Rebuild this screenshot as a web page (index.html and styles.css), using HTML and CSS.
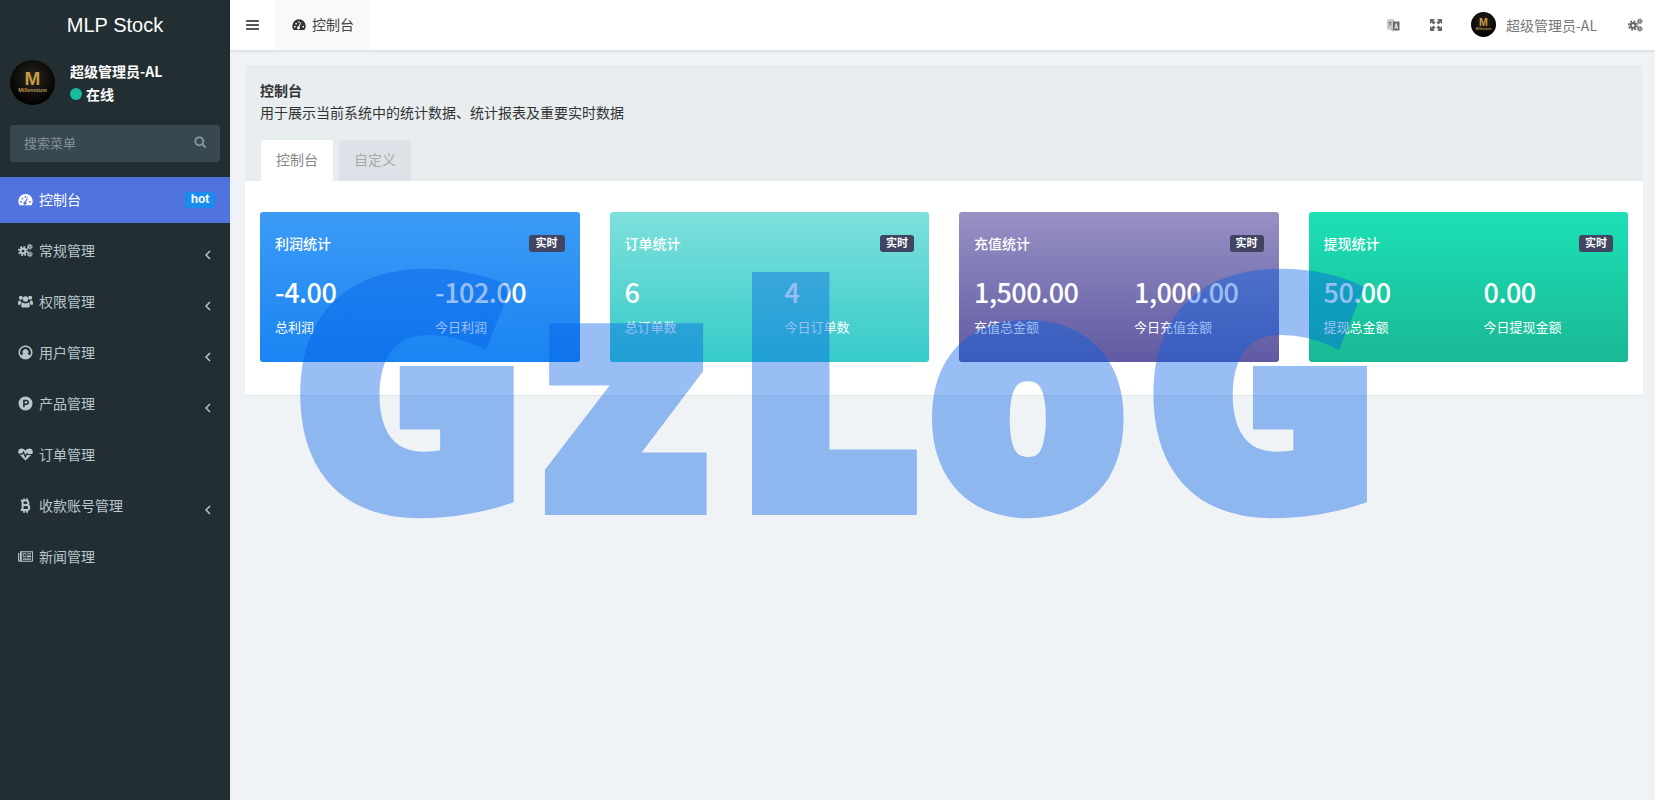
FILE: index.html
```html
<!DOCTYPE html>
<html lang="zh">
<head>
<meta charset="utf-8">
<title>MLP Stock</title>
<link rel="stylesheet" href="styles.css">
</head>
<body>
<svg class="sprite" xmlns="http://www.w3.org/2000/svg">
  <symbol id="i-gauge" viewBox="0 0 16 14"><path fill-rule="evenodd" fill="currentColor" d="M8 1A7.7 7.7 0 0 0 .3 8.7c0 1.5.4 2.9 1.2 4.1.2.3.5.4.8.4h11.4c.3 0 .6-.1.8-.4.8-1.2 1.2-2.6 1.2-4.1A7.7 7.7 0 0 0 8 1zM3.6 2.9zM2.2 9.5a1 1 0 1 0 2 0 1 1 0 1 0-2 0zM3.7 6a1 1 0 1 0 2 0 1 1 0 1 0-2 0zM7 4.2a1 1 0 1 0 2 0 1 1 0 1 0-2 0zM11.8 9.5a1 1 0 1 0 2 0 1 1 0 1 0-2 0zM9.9 4.6L7.4 9.1a1.7 1.7 0 1 0 1.2.5l2.1-4.7z"/></symbol>
  <symbol id="i-cogs" viewBox="0 0 16 14"><g fill="none" stroke="currentColor"><circle cx="5.4" cy="7.6" r="2.6" stroke-width="2.2"/><circle cx="5.4" cy="7.6" r="4.6" stroke-width="1.7" stroke-dasharray="2 1.6"/><circle cx="12.6" cy="3" r="1.5" stroke-width="1.3"/><circle cx="12.6" cy="3" r="2.6" stroke-width="1" stroke-dasharray="1.2 .85"/><circle cx="12.6" cy="11" r="1.5" stroke-width="1.3"/><circle cx="12.6" cy="11" r="2.6" stroke-width="1" stroke-dasharray="1.2 .85"/></g></symbol>
  <symbol id="i-users" viewBox="0 0 16 14"><g fill="currentColor"><circle cx="3" cy="3" r="2.1"/><circle cx="13" cy="3" r="2.1"/><circle cx="8" cy="4.4" r="2.9"/><path d="M0 9.2C0 7 .7 5.8 1.8 5.8c.5 0 1 .3 1.3.4-.2 1 .2 1.7.9 2.4-1 .5-1.6 1.2-1.9 2.1H1c-.6 0-1-.5-1-1.5zM16 9.2c0-2.2-.7-3.4-1.8-3.4-.5 0-1 .3-1.3.4.2 1-.2 1.7-.9 2.4 1 .5 1.6 1.2 1.9 2.1H15c.6 0 1-.5 1-1.5zM3.4 11.4c0-2 .8-3.3 1.8-3.3.8.6 1.7 1 2.8 1s2-.4 2.8-1c1 0 1.8 1.3 1.8 3.3 0 1.2-.7 2.1-1.8 2.1H5.2c-1.100 0-1.800-.9-1.800-2.100z"/></g></symbol>
  <symbol id="i-user" viewBox="0 0 16 16"><path fill-rule="evenodd" fill="currentColor" d="M8 .5a7.500 7.500 0 1 0 0 15 7.500 7.500 0 0 0 0-15zM8 2.100a5.900 5.900 0 0 1 4.700 9.400C12 10.300 11.100 9.900 10.300 9.700a3.100 3.100 0 1 0-4.600 0c-.8.2-1.700.6-2.400 1.800A5.900 5.900 0 0 1 8 2.100z"/></symbol>
  <symbol id="i-p" viewBox="0 0 16 16"><path fill-rule="evenodd" fill="currentColor" d="M8 .5a7.500 7.500 0 1 0 0 15 7.500 7.500 0 0 0 0-15zM5.500 3.900h3.400a2.800 2.800 0 0 1 0 5.600H7.200v2.600H5.500zM7.200 5.500v2.400h1.700a1.200 1.200 0 0 0 0-2.400z"/></symbol>
  <symbol id="i-heart" viewBox="0 0 16 14"><path fill="currentColor" d="M8 13.500L1.700 7.300C.6 6.200.2 5.200.2 4.200.2 2 1.800.7 3.900.7 5.500.7 7 1.700 8 3c1-1.300 2.500-2.300 4.100-2.300 2.100 0 3.700 1.300 3.700 3.500 0 1-.4 2-1.500 3.100z"/><path class="pulse" fill="none" stroke-width="1.300" d="M0 6.500h4.600l1.300-2 2 5 1.800-3.400.7.9h6"/></symbol>
  <symbol id="i-btc" viewBox="0 0 12 16"><path fill="none" stroke="currentColor" stroke-width="2.100" d="M1 2.800h5.700c3.100 0 3.100 4.700 0 4.700H2.900M2.900 7.500h4.300c3.700 0 3.700 5.300 0 5.300H1M2.900 2.800v10M4.500 .4v2.400M7.700 .4v2.400M4.500 12.800v2.800M7.700 12.800v2.800"/></symbol>
  <symbol id="i-news" viewBox="0 0 16 12"><path fill-rule="evenodd" fill="currentColor" d="M3 .5h13v10.200c0 .5-.4.8-.8.8H1.100c-.6 0-1-.4-1-1V2.300h1.200v8c0 .2.200.3.400.3s.4-.1.400-.3V.5zM4 1.500v9h11v-9zM5 2.500h3.800v3.800H5zM5.900 3.300v2.200h2.100V3.300zM9.700 2.500H14v.9H9.700zM9.700 4H14v.9H9.700zM9.700 5.500H14v.9H9.700zM5 7.200h9v.9H5zM5 8.800h9v.9H5z"/></symbol>
  <symbol id="i-bars" viewBox="0 0 14 12"><g fill="currentColor"><rect y="1" width="13" height="2" rx=".4"/><rect y="5" width="13" height="2" rx=".4"/><rect y="9" width="13" height="2" rx=".4"/></g></symbol>
  <symbol id="i-expand" viewBox="0 0 14 14"><path fill="currentColor" d="M1 1h5L4.500 2.500l2 2-2 2-2-2L1 6zM13 1v5l-1.500-1.500-2 2-2-2 2-2L8 1zM1 13V8l1.500 1.500 2-2 2 2-2 2L6 13zM13 13H8l1.500-1.500-2-2 2-2 2 2L13 8z"/></symbol>
  <symbol id="i-lang" viewBox="0 0 14 14"><path fill="#c9c9c9" d="M1 1.500l6-.8 1 1.300v10.500L1 11.200z"/><path fill="#666" d="M7 3.500h6.500v9H7z"/><path fill="none" stroke="#fff" stroke-width=".9" d="M8.700 11l1.500-5.500 1.500 5.500M9.300 9.300h1.900"/><path fill="none" stroke="#777" stroke-width=".8" d="M2.500 4.500h3M4 3.500v1M3 7.500l2-3M3.500 5.500l2 2"/><path fill="#bbb" d="M4 11.500l3 2.200v-2z"/></symbol>
  <symbol id="i-search" viewBox="0 0 14 14"><path fill="none" stroke="currentColor" stroke-width="1.900" d="M9.100 9.100l3.400 3.400M10 5.700a4.300 4.300 0 1 1-8.600 0 4.300 4.300 0 0 1 8.600 0z"/></symbol>
  <symbol id="i-logo" viewBox="0 0 45 45"><defs><radialGradient id="logo-bg" cx=".5" cy=".4" r=".6"><stop offset="0" stop-color="#2b2620"/><stop offset="1" stop-color="#000"/></radialGradient></defs><circle cx="22.500" cy="22.500" r="22.500" fill="url(#logo-bg)"/><text x="22.500" y="25" text-anchor="middle" class="logo-m">M</text><text x="22.500" y="31.500" text-anchor="middle" class="logo-s">Millennium</text></symbol>
</svg>

<aside class="sidebar">
  <div class="brand">MLP Stock</div>
  <div class="user-panel">
    <svg class="avatar"><use href="#i-logo"/></svg>
    <div class="user-info">
      <div class="user-name">超级管理员-AL</div>
      <div class="user-status"><span class="dot"></span>在线</div>
    </div>
  </div>
  <div class="search">
    <span>搜索菜单</span>
    <svg class="search-icon"><use href="#i-search"/></svg>
  </div>
  <nav class="menu">
    <a class="item active"><svg class="ic"><use href="#i-gauge"/></svg><span class="lbl">控制台</span><span class="hot">hot</span></a>
    <a class="item"><svg class="ic"><use href="#i-cogs"/></svg><span class="lbl">常规管理</span><svg class="chev" viewBox="0 0 6 10"><path d="M5 1L1 5l4 4"/></svg></a>
    <a class="item"><svg class="ic"><use href="#i-users"/></svg><span class="lbl">权限管理</span><svg class="chev" viewBox="0 0 6 10"><path d="M5 1L1 5l4 4"/></svg></a>
    <a class="item"><svg class="ic"><use href="#i-user"/></svg><span class="lbl">用户管理</span><svg class="chev" viewBox="0 0 6 10"><path d="M5 1L1 5l4 4"/></svg></a>
    <a class="item"><svg class="ic"><use href="#i-p"/></svg><span class="lbl">产品管理</span><svg class="chev" viewBox="0 0 6 10"><path d="M5 1L1 5l4 4"/></svg></a>
    <a class="item"><svg class="ic"><use href="#i-heart"/></svg><span class="lbl">订单管理</span></a>
    <a class="item"><svg class="ic"><use href="#i-btc"/></svg><span class="lbl">收款账号管理</span><svg class="chev" viewBox="0 0 6 10"><path d="M5 1L1 5l4 4"/></svg></a>
    <a class="item"><svg class="ic"><use href="#i-news"/></svg><span class="lbl">新闻管理</span></a>
  </nav>
</aside>

<div class="main">
  <header class="topbar">
    <svg class="bars"><use href="#i-bars"/></svg>
    <div class="top-tab"><svg class="top-tab-ic"><use href="#i-gauge"/></svg>控制台</div>
    <div class="top-right">
      <svg class="tool t-lang"><use href="#i-lang"/></svg>
      <svg class="tool t-expand"><use href="#i-expand"/></svg>
      <svg class="top-avatar"><use href="#i-logo"/></svg>
      <span class="top-name">超级管理员-AL</span>
      <svg class="tool t-cogs"><use href="#i-cogs"/></svg>
    </div>
  </header>

  <section class="panel">
    <div class="panel-head">
      <div class="ph-title">控制台</div>
      <div class="ph-desc">用于展示当前系统中的统计数据、统计报表及重要实时数据</div>
      <div class="tabs">
        <div class="tab current">控制台</div>
        <div class="tab">自定义</div>
      </div>
    </div>
    <div class="panel-body">
      <div class="card c-blue">
        <div class="card-head"><span>利润统计</span><span class="badge">实时</span></div>
        <div class="stats">
          <div><div class="num">-4.00</div><div class="cap">总利润</div></div>
          <div><div class="num">-102.00</div><div class="cap">今日利润</div></div>
        </div>
      </div>
      <div class="card c-teal">
        <div class="card-head"><span>订单统计</span><span class="badge">实时</span></div>
        <div class="stats">
          <div><div class="num">6</div><div class="cap">总订单数</div></div>
          <div><div class="num">4</div><div class="cap">今日订单数</div></div>
        </div>
      </div>
      <div class="card c-purple">
        <div class="card-head"><span>充值统计</span><span class="badge">实时</span></div>
        <div class="stats">
          <div><div class="num">1,500.00</div><div class="cap">充值总金额</div></div>
          <div><div class="num">1,000.00</div><div class="cap">今日充值金额</div></div>
        </div>
      </div>
      <div class="card c-green">
        <div class="card-head"><span>提现统计</span><span class="badge">实时</span></div>
        <div class="stats">
          <div><div class="num">50.00</div><div class="cap">提现总金额</div></div>
          <div><div class="num">0.00</div><div class="cap">今日提现金额</div></div>
        </div>
      </div>
    </div>
  </section>
</div>

<div class="watermark"><span class="w1">G</span><span class="w2">z</span><span class="w3">L</span><span class="w4">o</span><span>G</span></div>
</body>
</html>
```
FILE: styles.css
```css
* { box-sizing: border-box; }
html, body { margin: 0; height: 100%; }
body {
  display: flex;
  height: 800px;
  overflow: hidden;
  position: relative;
  background: #f0f3f6;
  font: 14px/20px "Noto Sans CJK SC", "Liberation Sans", sans-serif;
  color: #333;
}
.sprite { position: absolute; width: 0; height: 0; }
.logo-m { font: 700 19px "Liberation Sans", sans-serif; fill: #c99c45; }
.logo-s { font: 700 5.500px "Liberation Sans", sans-serif; fill: #b59152; }

.sidebar {
  width: 230px;
  flex: none;
  background: #222e32;
  display: flex;
  flex-direction: column;
}
.brand {
  height: 50px;
  text-align: center;
  font: 20px/50px "Liberation Sans", sans-serif;
  color: #fff;
}
.user-panel {
  display: flex;
  gap: 15px;
  padding: 10px 10px 0;
  height: 75px;
}
.avatar { width: 45px; height: 45px; flex: none; }
.user-info { color: #fff; font-weight: 700; }
.user-name { height: 23px; line-height: 22px; }
.user-status { display: flex; align-items: center; gap: 4px; line-height: 22px; }
.dot { width: 12px; height: 12px; border-radius: 50%; background: #18bc9c; }
.search {
  margin: 0 10px;
  height: 37px;
  padding: 0 13px 2px 14px;
  border-radius: 3px;
  background: #374850;
  color: #84919a;
  font-size: 13px;
  display: flex;
  align-items: center;
  justify-content: space-between;
}
.search-icon { width: 13px; height: 13px; color: #8d9aa1; }
.menu { margin-top: 15px; display: flex; flex-direction: column; gap: 5px; }
.item {
  height: 46px;
  display: flex;
  align-items: center;
  padding: 0 0 2px 18px;
  color: #b8c7ce;
  position: relative;
}
.item.active { color: #fff; background: linear-gradient(#4e72dc, #5274de); }
.ic { width: 15px; height: 15px; flex: none; margin-right: 6px; color: #b8c7ce; }
.active .ic { color: #fff; }
.pulse { stroke: #222e32; }
.lbl { flex: 1; }
.hot {
  width: 30px;
  height: 16px;
  margin: 2px 15px 0 0;
  border-radius: 3px;
  background: #1a8cf0;
  color: #fff;
  font: 700 12px/15px "Liberation Sans", sans-serif;
  text-align: center;
}
.chev {
  width: 6px;
  height: 10px;
  margin: 10px 19px 0 0;
  fill: none;
  stroke: #b8c7ce;
  stroke-width: 1.500;
}

.main { flex: 1; min-width: 0; display: flex; flex-direction: column; }
.topbar {
  height: 50px;
  flex: none;
  background: #fff;
  box-shadow: 0 1px 3px rgba(0, 0, 0, .12);
  display: flex;
  align-items: center;
  padding: 0 12px 0 16px;
}
.bars { width: 14px; height: 12px; color: #555; }
.top-tab {
  margin-left: 15px;
  width: 95px;
  height: 50px;
  padding: 0 0 2px 17px;
  background: #f9f9f9;
  color: #444;
  display: flex;
  align-items: center;
  gap: 6px;
}
.top-tab-ic { width: 14px; height: 13px; color: #333; }
.top-right { margin-left: auto; display: flex; align-items: center; padding-bottom: 1px; }
.tool { width: 14px; height: 14px; color: #666; }
.t-expand { margin-left: 29px; }
.top-avatar { width: 25px; height: 25px; margin-left: 28px; }
.top-name { margin-left: 10px; color: #777; }
.t-cogs { width: 15px; margin-left: 31px; }

.panel {
  margin: 15px 12px 0 15px;
  border-radius: 3px;
  overflow: hidden;
  background: #fff;
  box-shadow: 0 1px 1px rgba(0, 0, 0, .06);
}
.panel-head { height: 116px; padding: 14px 0 0 15px; background: #e8edf0; }
.ph-title { font-weight: 700; line-height: 22px; color: #333; }
.ph-desc { line-height: 22px; color: #333; }
.tabs { display: flex; gap: 6px; margin: 17px 0 0 1px; }
.tab {
  width: 72px;
  height: 41px;
  padding-left: 15px;
  line-height: 38px;
  border-radius: 3px 3px 0 0;
  background: #dce2e7;
  color: #aaa;
}
.tab.current { background: #fff; color: #888; }
.panel-body {
  display: grid;
  grid-template-columns: repeat(4, 1fr);
  gap: 30px;
  padding: 31px 15px 33px;
}
.card { height: 150px; border-radius: 3px; padding: 21px 15px 0; color: #fff; }
.c-blue { background: linear-gradient(#3c9bf6, #1a84f2); }
.c-teal { background: linear-gradient(#7ee0dc, #36cbc9); }
.c-purple { background: linear-gradient(#9791c4, #605aa3); }
.c-green { background: linear-gradient(#1ce0b6, #19b894); }
.card-head {
  display: flex;
  justify-content: space-between;
  align-items: flex-start;
  font-weight: 500;
  height: 20px;
}
.badge {
  width: 34px;
  height: 17px;
  margin-top: 2px;
  border-radius: 3px;
  background: #414562;
  text-align: center;
  font: 700 11px/15px "Noto Sans CJK SC", sans-serif;
}
.c-blue .badge { width: 36px; }
.stats { display: grid; grid-template-columns: 160px 1fr; margin-top: 19px; }
.num { font-size: 27px; letter-spacing: -.5px; line-height: 40px; font-weight: 500; }
.cap { margin-top: 5px; font-size: 13px; line-height: 20px; }

.watermark {
  position: absolute;
  left: 292px;
  top: 225px;
  font: 900 318px/1 "Noto Sans", sans-serif;
  color: rgb(0, 95, 231);
  -webkit-text-stroke: 16px rgb(0, 95, 231);
  opacity: .4;
  white-space: nowrap;
  pointer-events: none;
}
.w1 { letter-spacing: 18px; }
.w2 { letter-spacing: 29px; }
.w3 { letter-spacing: 6px; }
.w4 { letter-spacing: 16px; }
```
